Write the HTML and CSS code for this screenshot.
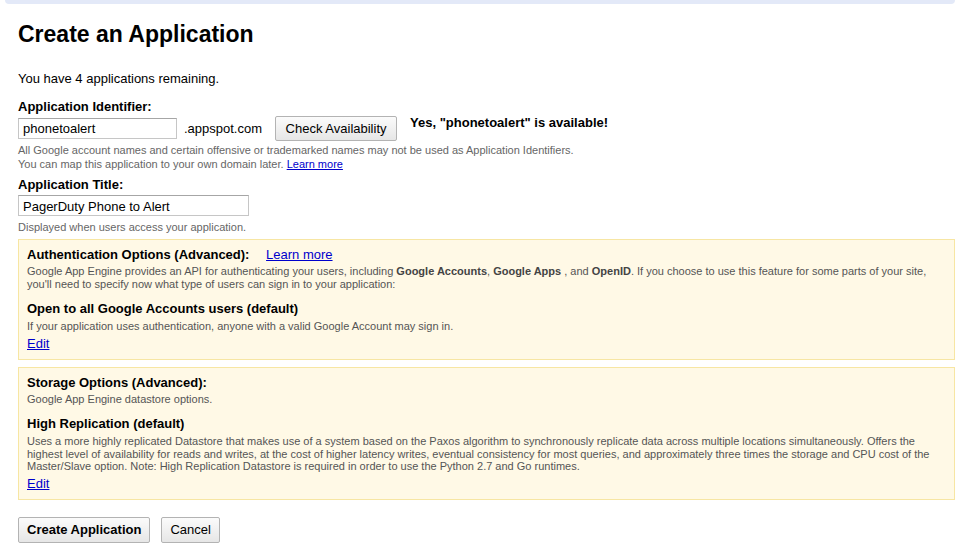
FILE: index.html
```html
<!DOCTYPE html>
<html>
<head>
<meta charset="utf-8">
<link rel="stylesheet" href="styles.css">
</head>
<body>
<div class="topbar"></div>
<div class="page">
  <h1 class="title">Create an Application</h1>
  <p class="remaining">You have 4 applications remaining.</p>

  <label class="label lbl-id">Application Identifier:</label>
  <div class="id-row">
    <input class="field field-id" type="text" value="phonetoalert">
    <span class="suffix">.appspot.com</span>
    <button class="btn btn-check">Check Availability</button>
    <span class="avail">Yes, "phonetoalert" is available!</span>
  </div>
  <div class="hint hint-id">
    <div>All Google account names and certain offensive or trademarked names may not be used as Application Identifiers.</div>
    <div>You can map this application to your own domain later. <a href="#" class="link">Learn more</a></div>
  </div>

  <label class="label lbl-title">Application Title:</label>
  <input class="field field-title" type="text" value="PagerDuty Phone to Alert">
  <div class="hint hint-title">Displayed when users access your application.</div>

  <div class="box box-auth">
    <div class="box-head">Authentication Options (Advanced): <a href="#" class="link head-link">Learn more</a></div>
    <div class="box-desc desc-first desc-auth"><span>Google App Engine provides an API for authenticating your users, including <b>Google Accounts</b>, <b>Google Apps</b> , and <b>OpenID</b>. If you choose to use this feature for some parts of your site,</span><br><span>you'll need to specify now what type of users can sign in to your application:</span></div>
    <div class="box-head sub-head sub-auth">Open to all Google Accounts users (default)</div>
    <div class="box-desc desc-sub">If your application uses authentication, anyone with a valid Google Account may sign in.</div>
    <a href="#" class="link edit">Edit</a>
  </div>

  <div class="box box-storage">
    <div class="box-head">Storage Options (Advanced):</div>
    <div class="box-desc desc-first">Google App Engine datastore options.</div>
    <div class="box-head sub-head">High Replication (default)</div>
    <div class="box-desc desc-sub">Uses a more highly replicated Datastore that makes use of a system based on the Paxos algorithm to synchronously replicate data across multiple locations simultaneously. Offers the highest level of availability for reads and writes, at the cost of higher latency writes, eventual consistency for most queries, and approximately three times the storage and CPU cost of the Master/Slave option. Note: High Replication Datastore is required in order to use the Python 2.7 and Go runtimes.</div>
    <a href="#" class="link edit">Edit</a>
  </div>

  <div class="actions">
    <button class="btn btn-create">Create Application</button>
    <button class="btn btn-cancel">Cancel</button>
  </div>
</div>
</body>
</html>
```

FILE: styles.css
```css
html, body {
  margin: 0;
  padding: 0;
  background: #fff;
}
body {
  font-family: "Liberation Sans", Arial, Helvetica, sans-serif;
  font-size: 13px;
  color: #000;
}
.topbar {
  height: 4px;
  margin: 0 9px 0 5px;
  background: #e3e9f8;
  border-radius: 0 0 4px 4px;
}
.page {
  padding: 0 9px 0 18px;
}
.title {
  margin: 16px 0 0;
  font-size: 23px;
  line-height: 28px;
  font-weight: bold;
}
.remaining {
  margin: 23px 0 0;
  line-height: 16px;
}
.label {
  display: block;
  font-weight: bold;
  line-height: 16px;
}
.lbl-id {
  margin-top: 12px;
}
.id-row {
  display: flex;
  align-items: center;
  height: 24px;
  margin-top: 1px;
}
.field {
  box-sizing: border-box;
  height: 21px;
  margin: 0;
  padding: 1px 4px 0;
  border: 1px solid #c6c6c6;
  border-top-color: #a6a6a6;
  font-family: "Liberation Sans", Arial, sans-serif;
  font-size: 13px;
  color: #000;
  background: #fff;
  outline: none;
}
.field-id {
  width: 159px;
}
.suffix {
  margin-left: 7px;
}
.btn {
  box-sizing: border-box;
  height: 24px;
  padding: 0 8px;
  border: 1px solid #b3b3b3;
  border-radius: 2px;
  background: linear-gradient(#fbfbfb, #e6e6e6);
  font-family: "Liberation Sans", Arial, sans-serif;
  font-size: 13px;
  color: #000;
  white-space: nowrap;
}
.btn-check {
  margin-left: 13px;
  width: 122px;
  height: 25px;
}
.avail {
  margin-left: 13px;
  font-weight: bold;
  align-self: flex-start;
  line-height: 16px;
  margin-top: -1px;
}
.hint {
  font-size: 11px;
  line-height: 14px;
  color: #666;
}
.hint-id {
  margin-top: 3px;
}
.link {
  color: #0000cc;
  text-decoration: underline;
}
.lbl-title {
  margin-top: 6px;
}
.field-title {
  display: block;
  width: 231px;
  margin-top: 2px;
}
.hint-title {
  margin-top: 4px;
}
.box {
  box-sizing: border-box;
  width: 937px;
  padding: 7px 8px 7px 8px;
  border: 1px solid #f7e6a3;
  background: #fff9e6;
}
.box-auth {
  margin-top: 5px;
}
.box-storage {
  margin-top: 7px;
}
.box-head {
  font-weight: bold;
  line-height: 16px;
}
.head-link {
  font-weight: normal;
  margin-left: 13px;
}
.box-desc {
  font-size: 11px;
  line-height: 12.5px;
  color: #555;
}
.desc-auth {
  line-height: 13px;
}
.box-desc b {
  color: #444;
}
.desc-first {
  margin-top: 2px;
}
.sub-head {
  margin-top: 11px;
}
.sub-auth {
  margin-top: 10px;
}
.desc-sub {
  margin-top: 3px;
}
.edit {
  display: block;
  width: max-content;
  margin-top: 3px;
  line-height: 16px;
}
.actions {
  display: flex;
  gap: 11px;
  margin-top: 17px;
}
.btn-create {
  font-weight: bold;
  height: 26px;
}
.btn-cancel {
  height: 26px;
}
```
